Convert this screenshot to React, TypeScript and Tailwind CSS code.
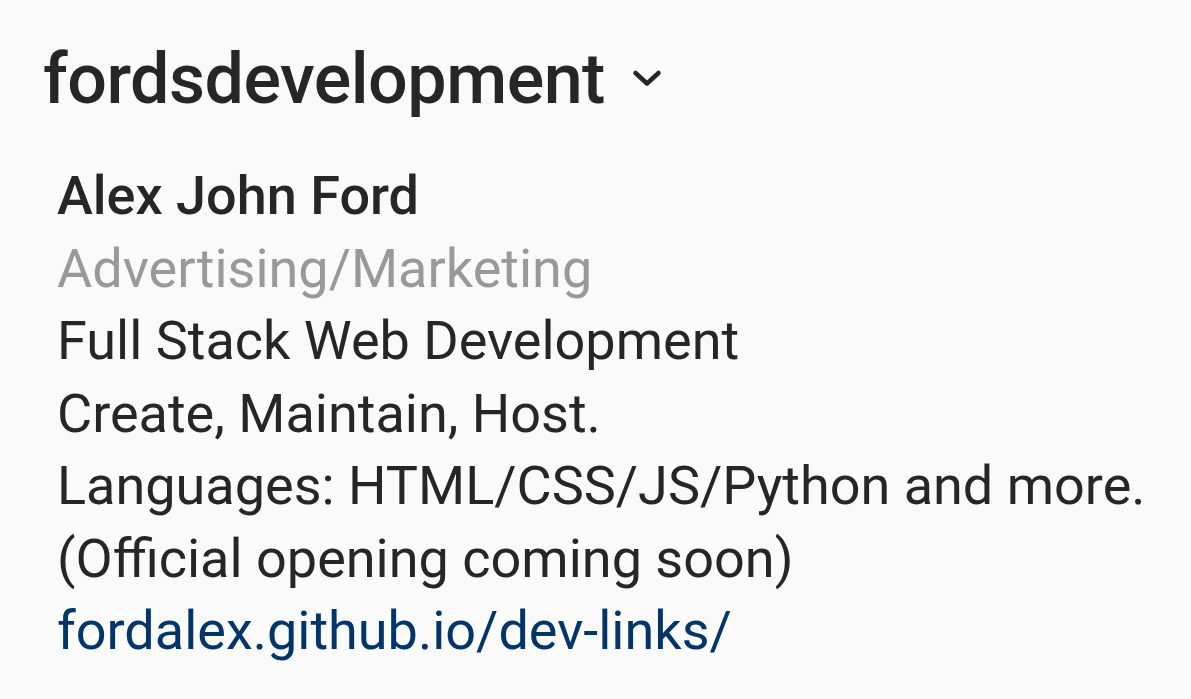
export default function App() {
  return (
    <div className="w-[1191px] h-[699px] bg-[#fafafa] overflow-hidden" style={{ fontFamily: 'Roboto, "Noto Sans", sans-serif' }}>
      <div className="pl-[43px] pt-[34px] flex items-center">
        <span className="text-[70px] leading-[90px] font-medium text-[#262626] tracking-[-0.5px]">fordsdevelopment</span>
        <svg className="ml-[27px]" width="30" height="20" viewBox="0 0 30 20">
          <path d="M3.5 4 L15 14.5 L26.5 4" fill="none" stroke="#262626" strokeWidth="4.5" strokeLinecap="round" strokeLinejoin="round" />
        </svg>
      </div>
      <div className="pl-[57px] pt-[36px] text-[54px] leading-[72.5px] text-[#262626]">
        <div className="font-medium">Alex John Ford</div>
        <div className="text-[#999999]">Advertising/Marketing</div>
        <div>Full Stack Web Development</div>
        <div>Create, Maintain, Host.</div>
        <div>Languages: HTML/CSS/JS/Python and more.</div>
        <div>(Official opening coming soon)</div>
        <div className="text-[#003569]">fordalex.github.io/dev-links/</div>
      </div>
    </div>
  );
}
